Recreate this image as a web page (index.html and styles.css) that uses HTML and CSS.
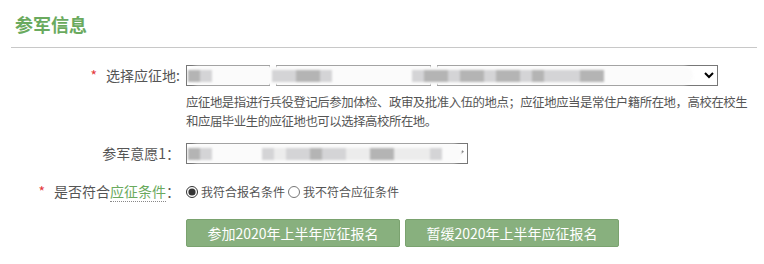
FILE: index.html
```html
<!DOCTYPE html>
<html>

<head>
    <title>参军信息</title>
    <link rel="stylesheet" href="styles.css">
</head>

<body>
    <div class="panel">
        <h2 class="title">参军信息</h2>
        <hr class="rule">

        <div class="row">
            <label class="label"><span class="star">*</span>选择应征地:</label>
            <div class="field">
                <div class="masked">
                    <select class="sel sel-a"><option></option></select>
                    <select class="sel sel-b"><option></option></select>
                    <select class="sel sel-c"><option></option></select>
                    <div class="blur blur-1">
                        <i class="px g2"></i><i class="px g1"></i><i class="gap w60"></i>
                        <i class="px g1"></i><i class="px g1"></i><i class="px g2"></i><i class="px g2"></i><i class="px g1"></i>
                        <i class="gap w80"></i><i class="px g1"></i><i class="px g2"></i><i class="px g2"></i><i class="px g1"></i>
                        <i class="px g2"></i><i class="px g2"></i><i class="px g1"></i><i class="px g2"></i><i class="px g2"></i>
                        <i class="px g1"></i><i class="px g2"></i><i class="px g1"></i><i class="px g1"></i><i class="px g1"></i>
                        <i class="px g2"></i><i class="px g2"></i>
                    </div>
                </div>
                <p class="hint">应征地是指进行兵役登记后参加体检、政审及批准入伍的地点；应征地应当是常住户籍所在地，高校在校生<br>和应届毕业生的应征地也可以选择高校所在地。</p>
            </div>
        </div>

        <div class="row row-wish">
            <label class="label">参军意愿1：</label>
            <div class="field">
                <div class="masked">
                    <select class="sel sel-wish"><option></option></select>
                    <div class="blur blur-2">
                        <i class="px g2"></i><i class="px g1"></i><i class="gap w50"></i>
                        <i class="px g1"></i><i class="px g0"></i><i class="px g1"></i><i class="px g1"></i><i class="px g2"></i>
                        <i class="px g1"></i><i class="px g1"></i><i class="px g0"></i><i class="px g0"></i><i class="px g2"></i>
                        <i class="px g2"></i><i class="px g0"></i><i class="px g0"></i><i class="px g0"></i><i class="px g1"></i>
                    </div>
                </div>
            </div>
        </div>

        <div class="row row-cond">
            <label class="label"><span class="star">*</span>是否符合<a class="term">应征条件</a>：</label>
            <div class="field radios">
                <label class="radio"><input type="radio" name="cond" checked>我符合报名条件</label>
                <label class="radio"><input type="radio" name="cond">我不符合应征条件</label>
            </div>
        </div>

        <div class="actions">
            <button class="btn" type="button">参加2020年上半年应征报名</button>
            <button class="btn" type="button">暂缓2020年上半年应征报名</button>
        </div>
    </div>
</body>

</html>
```

FILE: styles.css
```css
body {
    margin: 0;
    background: #fff;
    font-family: "Noto Sans CJK SC", "Liberation Sans", sans-serif;
    color: #555;
}

.panel {
    padding: 0 2px 0 11px;
}

.title {
    margin: 0;
    padding: 11px 0 0 4px;
    height: 26px;
    font-size: 18px;
    line-height: 26px;
    font-weight: bold;
    color: #6aaa5e;
}

.rule {
    margin: 10px 5px 0 0;
    border: none;
    border-top: 1px solid #c8c8c8;
}

.row {
    display: flex;
    align-items: flex-start;
    margin-top: 17px;
}

.label {
    flex: none;
    width: 169px;
    text-align: right;
    font-size: 14px;
    line-height: 21px;
    color: #555;
    white-space: nowrap;
}

.star {
    color: #e4393c;
    margin-right: 9px;
}

.field {
    flex: 1;
    min-width: 0;
    padding-left: 6px;
}

.masked {
    position: relative;
    display: flex;
    gap: 6px;
    height: 21px;
}

.sel {
    height: 21px;
    border: 1px solid #777;
    background: #fff;
    font-size: 12px;
    padding: 0;
}

.sel-a {
    width: 84px;
}

.sel-b {
    width: 155px;
}

.sel-c {
    width: 281px;
}

.sel-wish {
    width: 282px;
}

/* privacy blur over the chosen values */
.blur {
    position: absolute;
    left: 2px;
    top: 1px;
    height: 19px;
    display: flex;
    align-items: center;
    background: #fbfbfb;
    border-radius: 10px;
    filter: blur(1.2px);
}

.blur-1 {
    width: 505px;
}

.blur-2 {
    width: 275px;
}

.px {
    display: block;
    width: 12px;
    height: 12px;
}

.gap {
    display: block;
    height: 12px;
}

.w50 {
    width: 50px;
}

.w60 {
    width: 60px;
}

.w80 {
    width: 80px;
}

.g0 {
    background: #ececec;
}

.g1 {
    background: #d4d4d6;
}

.g2 {
    background: #b4b4b4;
}

.hint {
    margin: 7px 0 0;
    font-size: 12.4px;
    letter-spacing: -0.45px;
    line-height: 19px;
    white-space: nowrap;
    color: #555;
}

.row-wish {
    margin-top: 12px;
}

.term {
    color: #6aaa5e;
    border-bottom: 1px dotted #888;
}

.radios {
    display: flex;
    align-items: center;
    height: 21px;
    font-size: 12px;
}

.radio {
    display: flex;
    align-items: center;
    margin-right: 3px;
}

.radio input {
    margin: 0 3px 0 0;
    width: 12px;
    height: 12px;
    accent-color: #333;
}

.actions {
    display: flex;
    gap: 5px;
    margin: 17px 0 0 175px;
}

.btn {
    width: 214px;
    height: 28px;
    padding: 0;
    background: #88b07e;
    border: 1px solid #7aa26f;
    border-radius: 2px;
    color: #fff;
    font-family: "Noto Sans CJK SC", "Liberation Sans", sans-serif;
    font-size: 14px;
    line-height: 26px;
    cursor: pointer;
}
```
